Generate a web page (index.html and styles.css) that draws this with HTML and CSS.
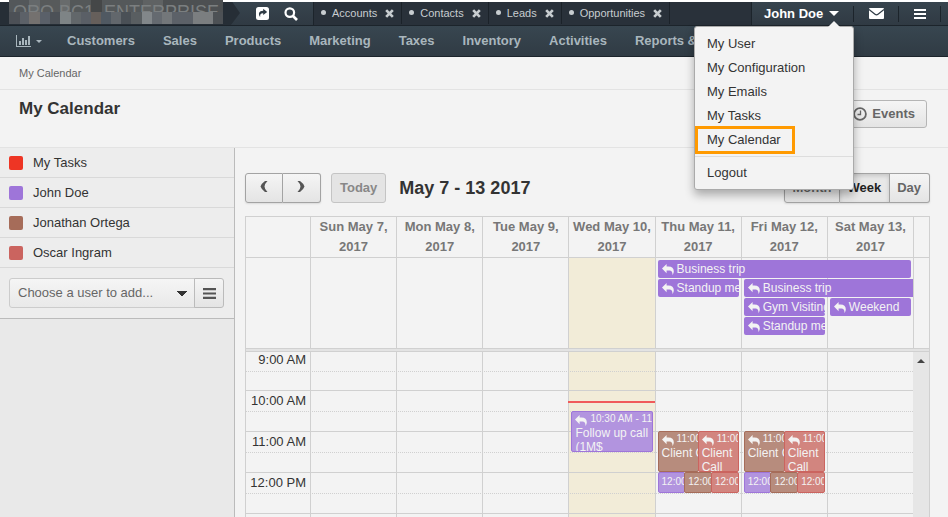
FILE: index.html
```html
<!DOCTYPE html>
<html lang="en">
<head>
<meta charset="utf-8">
<title>My Calendar</title>
<link rel="stylesheet" href="styles.css">
</head>
<body>
<svg class="defs" aria-hidden="true">
  <symbol id="reply" viewBox="0 0 12 11"><path fill="currentColor" d="M4.600 0v2.600h1.800c3.600 0 5.400 1.800 5.400 4.600 0 1.500-.6 2.800-1.400 3.800.1-1 .1-2.100-.4-3-.6-1-1.700-1.400-3.600-1.400H4.600v2.600L0 4.600z"/></symbol>
  <symbol id="close" viewBox="0 0 10 10"><path fill="none" stroke="currentColor" stroke-width="3" d="M1.300 1.300l7.400 7.400M8.700 1.300L1.300 8.700"/></symbol>
  <symbol id="bars" viewBox="0 0 12 10"><path fill="currentColor" d="M0 0h12v2H0zM0 4h12v2H0zM0 8h12v2H0z"/></symbol>
</svg>
<header>
  <div class="topbar">
    <a class="brand" href="#"><span class="brand-text">ORO BC1, ENTERPRISE</span>
      <span class="mosaic"></span></a>
    <div class="tools">
      <button class="tool" aria-label="Shortcuts"><svg width="13" height="13" viewBox="0 0 13 13"><rect width="13" height="13" rx="2.500" fill="#fff"/><path fill="#2f3b45" d="M7.200 1.800l4 3.100-4 3.100V6.200c-2.200-.1-3.300.8-3 3.800C1.800 7 2.900 3.700 7.200 3.700z"/></svg></button>
      <button class="tool" aria-label="Search"><svg width="14" height="14" viewBox="0 0 14 14"><circle cx="5.800" cy="5.600" r="4.300" fill="none" stroke="#fff" stroke-width="2.200"/><path d="M9 9l4 4" stroke="#fff" stroke-width="2.600"/></svg></button>
    </div>
    <nav class="pins" aria-label="Pinned pages">
      <div class="pin"><a href="#">Accounts</a><button aria-label="Unpin Accounts"><svg width="9" height="9"><use href="#close"/></svg></button></div>
      <div class="pin"><a href="#">Contacts</a><button aria-label="Unpin Contacts"><svg width="9" height="9"><use href="#close"/></svg></button></div>
      <div class="pin"><a href="#">Leads</a><button aria-label="Unpin Leads"><svg width="9" height="9"><use href="#close"/></svg></button></div>
      <div class="pin"><a href="#">Opportunities</a><button aria-label="Unpin Opportunities"><svg width="9" height="9"><use href="#close"/></svg></button></div>
    </nav>
    <div class="user">
      <button class="user-name">John Doe<span class="caret"></span></button>
      <button class="user-icon" aria-label="Emails"><svg width="15" height="11" viewBox="0 0 15 11"><rect width="15" height="11" rx="1" fill="#fff"/><path d="M0 1.500l6 4.800q1.500 1.200 3 0l6-4.800" fill="none" stroke="#2f3b45" stroke-width="1.200"/></svg></button>
      <button class="user-icon" aria-label="Menu"><svg width="12" height="10"><use href="#bars"/></svg></button>
      <ul class="dropdown">
        <li><a href="#">My User</a></li>
        <li><a href="#">My Configuration</a></li>
        <li><a href="#">My Emails</a></li>
        <li><a href="#">My Tasks</a></li>
        <li><a class="marked" href="#">My Calendar</a></li>
        <li class="last"><a href="#">Logout</a></li>
      </ul>
    </div>
  </div>
  <nav class="menu" aria-label="Main">
    <a class="dash" href="#" aria-label="Dashboards"><svg width="15" height="12" viewBox="0 0 15 12"><path fill="currentColor" d="M0 0h1v11h14v1H0zM3 6h2v4H3zM6 3h2v7H6zM9 5h2v5H9zM12 1h2v9h-2z"/></svg><span class="caret small"></span></a>
    <a href="#">Customers</a><a href="#">Sales</a><a href="#">Products</a><a href="#">Marketing</a><a href="#">Taxes</a><a href="#">Inventory</a><a href="#">Activities</a><a href="#">Reports &amp;</a>
  </nav>
</header>
<div class="crumbs">My Calendar</div>
<div class="title">
  <h1>My Calendar</h1>
  <button class="btn events-btn"><svg width="14" height="14" viewBox="0 0 14 14"><circle cx="7" cy="7" r="5.900" fill="none" stroke="#666" stroke-width="1.800"/><path d="M7.500 3.500v4H4.500" fill="none" stroke="#666" stroke-width="1.300"/></svg>Events</button>
</div>
<main>
  <aside>
    <ul class="people">
      <li><span class="swatch red"></span>My Tasks</li>
      <li><span class="swatch purple"></span>John Doe</li>
      <li><span class="swatch brown"></span>Jonathan Ortega</li>
      <li><span class="swatch rose"></span>Oscar Ingram</li>
    </ul>
    <div class="chooser">
      <select aria-label="Choose a user to add"><option>Choose a user to add...</option></select>
      <button class="list-btn" aria-label="Browse users"><svg width="13" height="11" viewBox="0 0 12 10"><use href="#bars"/></svg></button>
    </div>
  </aside>
  <section class="calendar">
    <div class="toolbar">
      <div class="group arrows">
        <button class="btn" aria-label="Previous"><svg width="8" height="12" viewBox="0 0 8 12"><path fill="#555" d="M7.500 0H5Q1.500 2.500.5 5.500 1.500 8.500 5 11H7.500Q4.500 8 4.500 5.500 4.500 3 7.500 0z"/></svg></button>
        <button class="btn" aria-label="Next"><svg width="8" height="12" viewBox="0 0 8 12"><path fill="#555" d="M.5 0H3Q6.500 2.500 7.500 5.500 6.500 8.500 3 11H.5Q3.500 8 3.500 5.500 3.500 3 .5 0z"/></svg></button>
      </div>
      <button class="btn today" disabled>Today</button>
      <h2>May 7 - 13 2017</h2>
      <div class="group views">
        <button class="btn">Month</button><button class="btn active">Week</button><button class="btn">Day</button>
      </div>
    </div>
    <table class="cal">
      <thead>
        <tr><td></td><th>Sun May 7, 2017</th><th>Mon May 8, 2017</th><th>Tue May 9, 2017</th><th>Wed May 10, 2017</th><th>Thu May 11, 2017</th><th>Fri May 12, 2017</th><th>Sat May 13, 2017</th><td></td></tr>
      </thead>
      <tbody>
        <tr class="allday">
          <td></td><td></td><td></td><td></td><td class="now"></td><td></td><td></td><td></td><td></td>
          <td class="layer">
            <div class="bar c5 r1 span3"><svg><use href="#reply"/></svg><span>Business trip</span></div>
            <div class="bar c5 r2"><svg><use href="#reply"/></svg><span>Standup meeting</span></div>
            <div class="bar c6 r2 span2 cont"><svg><use href="#reply"/></svg><span>Business trip</span></div>
            <div class="bar c6 r3"><svg><use href="#reply"/></svg><span>Gym Visiting</span></div>
            <div class="bar c7 r3"><svg><use href="#reply"/></svg><span>Weekend</span></div>
            <div class="bar c6 r4"><svg><use href="#reply"/></svg><span>Standup meeting</span></div>
          </td>
        </tr>
        <tr class="divider"><td></td></tr>
        <tr class="hours">
          <td class="axis"><div>9:00 AM</div><div>10:00 AM</div><div>11:00 AM</div><div>12:00 PM</div></td>
          <td></td><td></td><td></td><td class="now"></td><td></td><td></td><td></td>
          <td class="scroll"><span class="up"></span></td>
          <td class="lines"><div></div><div></div><div></div><div></div></td>
          <td class="layer">
            <div class="time-mark"></div>
            <div class="slot c4 at1030"><div class="ev purple"><div class="when"><svg><use href="#reply"/></svg>10:30 AM - 11:30 AM</div>Follow up call (1M$</div></div>
            <div class="slot c5 at11"><div class="ev brown"><div class="when"><svg><use href="#reply"/></svg>11:00 AM</div><div class="line">Client Call</div></div><div class="ev rose"><div class="when"><svg><use href="#reply"/></svg>11:00 AM</div>Client Call</div></div>
            <div class="slot c6 at11"><div class="ev brown"><div class="when"><svg><use href="#reply"/></svg>11:00 AM</div><div class="line">Client Call</div></div><div class="ev rose"><div class="when"><svg><use href="#reply"/></svg>11:00 AM</div>Client Call</div></div>
            <div class="slot c5 at12"><div class="ev purple"><div class="when">12:00</div></div><div class="ev brown"><div class="when">12:00</div></div><div class="ev rose"><div class="when">12:00</div></div></div>
            <div class="slot c6 at12"><div class="ev purple"><div class="when">12:00</div></div><div class="ev brown"><div class="when">12:00</div></div><div class="ev rose"><div class="when">12:00</div></div></div>
          </td>
        </tr>
      </tbody>
    </table>
  </section>
</main>
</body>
</html>
```

FILE: styles.css
```css
* { box-sizing: border-box; }
html, body { height: 100%; }
body {
  margin: 0; padding-top: 2px; overflow: hidden;
  display: flex; flex-direction: column;
  background: linear-gradient(#fff 2px, #f3f3f3 2px);
  font: 13px/20px "Liberation Sans", Arial, sans-serif; color: #333;
}
.defs { position: absolute; width: 0; height: 0; }
a { color: inherit; text-decoration: none; }
button { font: inherit; color: inherit; border: 0; padding: 0; margin: 0; background: none; }
ul { list-style: none; margin: 0; padding: 0; }
svg { display: block; flex: none; }
header { flex: none; }

/* Top bar */
.topbar { display: flex; height: 24px; background: linear-gradient(#37444e, #303a43); border-bottom: 1px solid #1c242b; }
.brand {
  position: relative; width: 240px; height: 25px; margin-top: -2px; padding-left: 9px; flex: none;
  background: linear-gradient(#fff 2px, #262e36 2px);
  clip-path: polygon(0 0, 231px 0, 240px 52%, 231px 100%, 0 100%);
}
.brand-text {
  display: block; width: 214px; height: 24px; padding: 0 4px; white-space: nowrap;
  font-size: 18px; line-height: 24px; color: #7b7f80;
  background: linear-gradient(90deg, #53575a 20px, #64686a 20px 31px, #575a5b 31px 51px, #686b6c 51px 61px, #545859 61px 82px, #454748 82px 93px, #54585a 93px 134px, #5f6263 134px 154px, #4d5052 154px);
}
.mosaic {
  position: absolute; left: 9px; top: 12px; width: 214px; height: 12px;
  background: linear-gradient(90deg, #4c5056 11px, #5c6168 11px 20px, #74716f 20px 31px, #5a6069 31px 41px, #4c5157 41px 51px, #7e8486 51px 62px, #62676a 62px 72px, #5a5f66 72px 82px, #665f5b 82px 92px, #505962 92px 102px, #62676c 102px 112px, #4a5056 112px 122px, #595e61 122px 133px, #82878a 133px 143px, #656a70 143px 153px, #73777a 153px 163px, #5c6168 163px 184px, #7b7e80 184px 204px, #4d5155 204px);
}
.tools { display: flex; gap: 15px; padding: 0 13px 0 16px; width: 74px; align-items: center; flex: none; border-right: 1px solid #1c242b; }
.pins { display: flex; flex: 1; min-width: 0; background: #29313a; font-size: 11px; color: #c8cdd0; border-right: 1px solid #1c242b; padding-bottom: 1px; }
.pin { display: flex; align-items: center; gap: 8px; padding: 0 7px; border-right: 1px solid #1b2229; }
.pin a::before { content: ""; display: inline-block; width: 5px; height: 5px; margin-right: 6px; border-radius: 50%; background: #c8cdd0; vertical-align: 2px; }
.user { position: relative; display: flex; align-items: center; flex: none; color: #fff; width: 196px; }
.user-name { display: flex; align-items: center; gap: 6px; width: 101px; padding-left: 12px; font-weight: bold; }
.caret { border: 5px solid transparent; border-top: 5px solid; border-bottom: 0; }
.caret.small { border-width: 3px; border-bottom: 0; }
.user-icon { display: flex; justify-content: center; align-items: center; width: 45px; height: 16px; border-left: 1px solid #1c242b; }
.user-icon:nth-of-type(3) { width: 43px; border-right: 1px solid #1c242b; }
.dropdown {
  position: absolute; z-index: 5; top: 24px; left: -58px; width: 160px; padding: 5px 0 4px;
  background: #f3f3f3; color: #333; border: 1px solid #aaa; border-radius: 3px; box-shadow: 0 5px 10px rgba(0,0,0,.3);
}
.dropdown::before { content: ""; position: absolute; top: -6px; left: 133px; border: 6px solid transparent; border-top: 0; border-bottom-color: #f3f3f3; }
.dropdown a { display: block; padding: 2px 12px; }
.dropdown .marked { width: 100px; margin: -2px 0 2px; padding: 0 9px; border: 3px solid #ff9a00; line-height: 22px; }
.dropdown .last { border-top: 1px solid #ddd; padding-top: 4px; }

/* Main menu */
.menu { display: flex; align-items: center; gap: 28px; height: 31px; overflow: hidden; white-space: nowrap; padding: 0 16px; background: linear-gradient(#384650, #303b44); border-bottom: 1px solid #1c242b; color: #a9b6bd; font-weight: bold; }
.dash { display: flex; align-items: center; gap: 5px; margin-right: -3px; }

.crumbs { flex: none; height: 33px; padding: 6px 19px; font-size: 11px; color: #666; border-bottom: 1px solid #e3e3e3; }
.title { flex: none; display: flex; justify-content: space-between; align-items: flex-start; height: 58px; padding: 9px 21px 0 19px; border-bottom: 1px solid #e3e3e3; }
h1 { margin: 0; font-size: 17px; line-height: 20px; }
.btn { border: 1px solid #b5b5b5; border-radius: 3px; background: linear-gradient(#f5f5f5, #e4e4e4); color: #666; font-weight: bold; }
.events-btn { display: flex; align-items: center; gap: 5px; height: 28px; margin-top: 1px; padding: 0 11px 0 10px; }

main { display: flex; flex: 1; min-height: 0; }
aside { width: 235px; flex: none; background: #e9e9e9; border-right: 1px solid #bbb; }
.people, .chooser { background: #ededed; }
.people li { display: flex; align-items: center; gap: 10px; height: 30px; padding: 0 9px; border-bottom: 1px solid #d9d9d9; }
.swatch { width: 14px; height: 14px; border-radius: 2px; }
.swatch.red { background: #ee3524; }
.swatch.purple { background: #9e75d9; }
.swatch.brown { background: #a66c59; }
.swatch.rose { background: #cb645f; }
.chooser { display: flex; padding: 10px 10px 10px 9px; border-bottom: 1px solid #bbb; }
.chooser select {
  appearance: none; flex: 1; min-width: 0; height: 30px; padding: 0 8px; font: inherit; color: #666;
  border: 1px solid #ccc; border-radius: 3px 0 0 3px;
  background: linear-gradient(to bottom left, #333 50%, transparent 51%) 167px 12px / 5px 5px no-repeat,
    linear-gradient(to bottom right, #333 50%, transparent 51%) 172px 12px / 5px 5px no-repeat,
    linear-gradient(#f5f5f5, #e9e9e9);
}
.list-btn { display: flex; align-items: center; justify-content: center; width: 30px; margin-left: -1px; color: #555; border: 1px solid #bbb; border-radius: 0 3px 3px 0; background: linear-gradient(#f5f5f5, #e4e4e4); }

/* Calendar */
.calendar { flex: 1; min-width: 0; padding: 25px 18px 0 10px; overflow: hidden; display: flex; flex-direction: column; }
.toolbar { display: flex; align-items: center; height: 30px; flex: none; margin-bottom: 13px; }
.group { display: flex; box-shadow: 0 1px 2px rgba(0,0,0,.1); border-radius: 3px; }
.toolbar .btn { height: 30px; border-color: #a3a3a3; padding: 0 8px; }
.group .btn + .btn { border-left: 0; border-top-left-radius: 0; border-bottom-left-radius: 0; }
.group .btn:not(:last-child) { border-top-right-radius: 0; border-bottom-right-radius: 0; }
.arrows .btn { width: 38px; padding: 0 14px 3px; }
.toolbar .today { margin: 0 13px 0 10px; background: #e4e4e4; border-color: #c4c4c4; color: #888; }
h2 { margin: 0; font-size: 18px; line-height: 20px; }
.views { margin-left: auto; }
.toolbar .views .btn { padding: 0 8px 0 7px; }
.toolbar .views .active { color: #222; background: #e8e8e8; box-shadow: inset 0 2px 4px rgba(0,0,0,.15); }
.cal { display: flex; flex-direction: column; flex: 1; min-height: 0; border: 1px solid #d0d0d0; border-bottom: 0; }
.cal thead { display: block; flex: none; }
.cal tbody { display: flex; flex-direction: column; flex: 1; min-height: 0; }
.cal tr { display: grid; flex: none; grid-template-columns: 64px repeat(7, minmax(0, 1fr)) 16px; }
.cal th, .cal td { padding: 0; border-left: 1px solid #d0d0d0; }
.cal tr > :first-child { border-left: 0; }
.cal thead tr { height: 41px; border-bottom: 1px solid #d0d0d0; color: #777; }
.cal td.now { background: #f2ecd8; }
.cal .allday { height: 90px; }
.allday td, .hours td { grid-row: 1; }
.cal td:nth-child(1) { grid-column: 1; }
.cal td:nth-child(2) { grid-column: 2; }
.cal td:nth-child(3) { grid-column: 3; }
.cal td:nth-child(4) { grid-column: 4; }
.cal td:nth-child(5) { grid-column: 5; }
.cal td:nth-child(6) { grid-column: 6; }
.cal td:nth-child(7) { grid-column: 7; }
.cal td:nth-child(8) { grid-column: 8; }
.cal td:nth-child(9) { grid-column: 9; }
.cal td.layer { grid-column: 2 / 9; border: 0; display: grid; grid-template-columns: repeat(7, minmax(0, 1fr)); position: relative; }
.cal .allday .layer { grid-template-rows: repeat(4, 18px); row-gap: 1px; padding-top: 2px; align-content: start; }
.bar { display: flex; align-items: center; gap: 3px; margin: 0 2px 0 3px; padding-left: 4px; overflow: hidden; white-space: nowrap; border-radius: 2px; color: #f3f3f3; background: #9e75d9; font-size: 12px; }
.bar svg { width: 12px; height: 11px; }
.bar.span3 { grid-column-end: span 3; }
.bar.span2 { grid-column-end: span 2; }
.bar.cont { margin-right: 0; border-radius: 2px 0 0 2px; }
.c4 { grid-column-start: 4; }
.c5 { grid-column-start: 5; }
.c6 { grid-column-start: 6; }
.c7 { grid-column-start: 7; }
.r1 { grid-row: 1; }
.r2 { grid-row: 2; }
.r3 { grid-row: 3; }
.r4 { grid-row: 4; }
.cal .divider { display: block; height: 4px; background: #e3e3e3; border: 1px solid #d0d0d0; border-width: 1px 0; }
.divider td { display: none; }
.cal .hours { flex: 1; min-height: 0; overflow: hidden; }
.axis { text-align: right; }
.axis div { height: 41px; padding-right: 4px; line-height: 20px; }
.axis div:first-child { height: 39px; line-height: 16px; }
.cal td.lines { grid-column: 1 / 9; border: 0; }
.lines div { height: 41px; border-bottom: 1px solid #d0d0d0; background: repeating-linear-gradient(90deg, #d0d0d0 0 1px, transparent 1px 2px) 0 20px / 100% 1px no-repeat; }
.lines div:first-child { height: 39px; background-position: 0 19px; }
.cal .scroll { background: #e6e6e6; border: 0; display: flex; justify-content: center; padding-top: 7px; }
.up { width: 0; height: 4px; border: 4px solid transparent; border-top: 0; border-bottom-color: #444; }
.cal .hours .layer { grid-template-rows: 51px 8px 20px 21px 20px 21px; align-content: start; }
.time-mark { grid-column: 4; grid-row: 1; align-self: end; height: 2px; background: #f05a5a; }
.slot { display: flex; margin: 0 2px 0 3px; min-height: 0; }
.at1030 { grid-row: 3 / 5; }
.at11 { grid-row: 4 / 6; }
.at12 { grid-row: 6; }
.ev { flex: 1; min-width: 0; padding: 1px 0 0 3px; overflow: hidden; border: 1px solid; border-radius: 2px; color: #f3f3f3; font-size: 12px; line-height: 14px; }
.ev + .ev { margin-left: -1px; }
.ev.purple { background: #b294df; border-color: #9e75d9; }
.ev.brown { background: #b78c7d; border-color: #a66c59; }
.ev.rose { background: #d2857f; border-color: #cb645f; }
.line, .when { white-space: nowrap; }
.when { display: flex; gap: 3px; height: 13px; font-size: 10px; line-height: 12px; }
.when svg { width: 12px; height: 11px; margin-top: 2px; }
.at12 .when { line-height: 16px; height: 16px; }
```
